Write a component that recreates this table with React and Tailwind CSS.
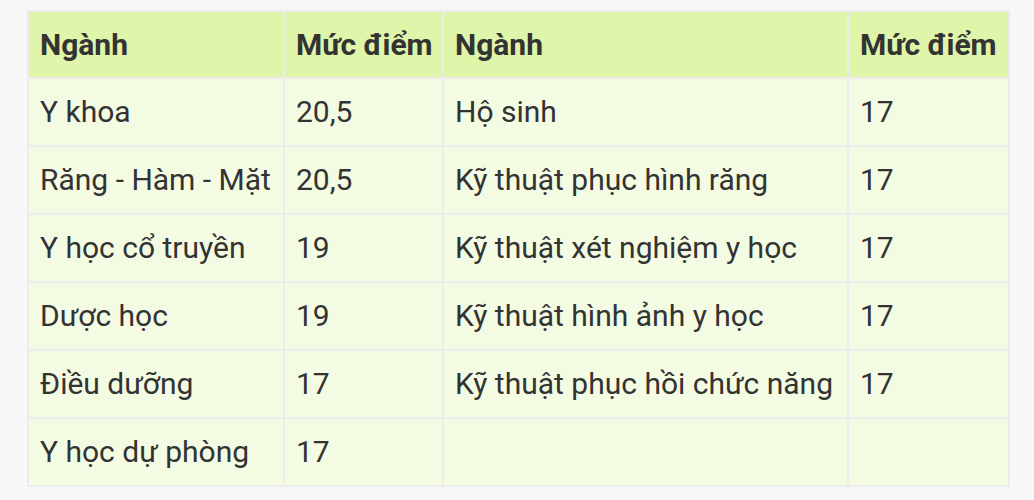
import React from 'react';

const rows = [
    ['Y khoa', '20,5', 'Hộ sinh', '17'],
    ['Răng - Hàm - Mặt', '20,5', 'Kỹ thuật phục hình răng', '17'],
    ['Y học cổ truyền', '19', 'Kỹ thuật xét nghiệm y học', '17'],
    ['Dược học', '19', 'Kỹ thuật hình ảnh y học', '17'],
    ['Điều dưỡng', '17', 'Kỹ thuật phục hồi chức năng', '17'],
    ['Y học dự phòng', '17', '', ''],
];

const App = () => {
    return (
        <div className="min-h-[500px] bg-[#f8f8f8] pt-[10px] pl-[27px]" style={{ fontFamily: 'Roboto, "Noto Sans", sans-serif' }}>
            <table className="border-collapse table-fixed w-[981px] text-[30px] leading-[40px] text-[#333333]">
                <colgroup>
                    <col className="w-[256px]" />
                    <col className="w-[159px]" />
                    <col className="w-[405px]" />
                    <col className="w-[161px]" />
                </colgroup>
                <thead>
                    <tr className="h-[67px] bg-[#dff5a9]">
                        <th className="border-2 border-[#ececec] px-[11px] text-left font-bold">Ngành</th>
                        <th className="border-2 border-[#ececec] px-[11px] text-left font-bold whitespace-nowrap">Mức điểm</th>
                        <th className="border-2 border-[#ececec] px-[11px] text-left font-bold">Ngành</th>
                        <th className="border-2 border-[#ececec] px-[11px] text-left font-bold whitespace-nowrap">Mức điểm</th>
                    </tr>
                </thead>
                <tbody>
                    {rows.map((r, i) => (
                        <tr key={i} className="h-[68px] bg-[#f3fbe2]">
                            {r.map((c, j) => (
                                <td key={j} className="border-2 border-[#ececec] px-[11px] whitespace-nowrap">{c}</td>
                            ))}
                        </tr>
                    ))}
                </tbody>
            </table>
        </div>
    )
}

export default App
